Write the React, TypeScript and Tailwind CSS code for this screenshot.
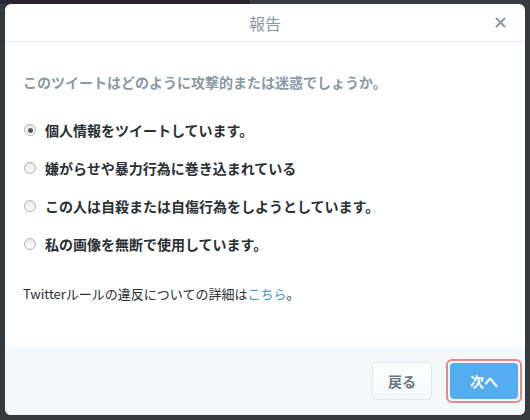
import { useState } from "react";

const JP = "font-['Meiryo','Noto_Sans_CJK_JP','Noto_Sans',sans-serif]";

const options = [
  "個人情報をツイートしています。",
  "嫌がらせや暴力行為に巻き込まれている",
  "この人は自殺または自傷行為をしようとしています。",
  "私の画像を無断で使用しています。",
];

function Radio({ checked }: { checked: boolean }) {
  return (
    <span className="w-[12px] h-[12px] rounded-full border border-[#b4b4b4] bg-gradient-to-b from-[#e9e9e9] to-[#fbfbfb] flex items-center justify-center shrink-0">
      {checked && <span className="w-[5px] h-[5px] rounded-full bg-[#555]" />}
    </span>
  );
}

export default function App() {
  const [selected, setSelected] = useState(0);

  return (
    <div className={`w-[530px] h-[420px] bg-[#343a3e] overflow-hidden ${JP}`}>
      {/* bande du fond */}
      <div className="flex h-[4px]">
        <div className="w-[250px] bg-[#2b2530]" />
        <div className="flex-1 bg-[#363c40]" />
      </div>

      <div className="ml-[5px] w-[520px] rounded-[6px] bg-white overflow-hidden">
        {/* En-tête */}
        <div className="relative h-[38px] border-b border-[#e1e8ed] flex items-center justify-center">
          <span className="text-[16px] text-[#8899a6] leading-none">報告</span>
          <button type="button" className="absolute right-[19px] top-[13px] text-[#8899a6]" aria-label="閉じる">
            <svg width="11" height="11" viewBox="0 0 11 11" fill="none" stroke="currentColor" strokeWidth={2} strokeLinecap="round">
              <path d="M1.5 1.5l8 8M9.5 1.5l-8 8" />
            </svg>
          </button>
        </div>

        {/* Corps */}
        <div className="pl-[18px] pr-4 pt-[30px] pb-[43px]">
          <p className="text-[14px] leading-[20px] font-bold text-[#8899a6]">
            このツイートはどのように攻撃的または迷惑でしょうか。
          </p>

          <div className="mt-[28px] flex flex-col gap-[18px] pl-[1px]">
            {options.map((label, i) => (
              <label
                key={label}
                onClick={() => setSelected(i)}
                className="flex items-center gap-[9px] h-[20px] cursor-pointer"
              >
                <Radio checked={selected === i} />
                <span className="text-[14px] font-bold text-[#292f33] leading-[20px]">{label}</span>
              </label>
            ))}
          </div>

          <p className="mt-[30px] text-[13px] leading-[20px] text-[#292f33]">
            Twitterルールの違反についての詳細は<a href="#" className="text-[#3b94d9]">こちら</a>。
          </p>
        </div>

        {/* Pied */}
        <div className="h-[68px] bg-[#f5f8fa] flex items-center justify-end gap-[14px] pr-[3px]">
          <button
            type="button"
            className="w-[60px] h-[38px] rounded-[4px] border border-[#e1e8ed] bg-gradient-to-b from-white to-[#f5f8fa] text-[14px] font-bold text-[#66757f]"
          >
            戻る
          </button>
          <div className="p-[2px] rounded-[6px] border-2 border-[#e5888c]">
            <button
              type="button"
              className="w-[68px] h-[36px] rounded-[4px] bg-[#55acee] text-[14px] font-bold text-white block"
            >
              次へ
            </button>
          </div>
        </div>
      </div>
    </div>
  );
}
